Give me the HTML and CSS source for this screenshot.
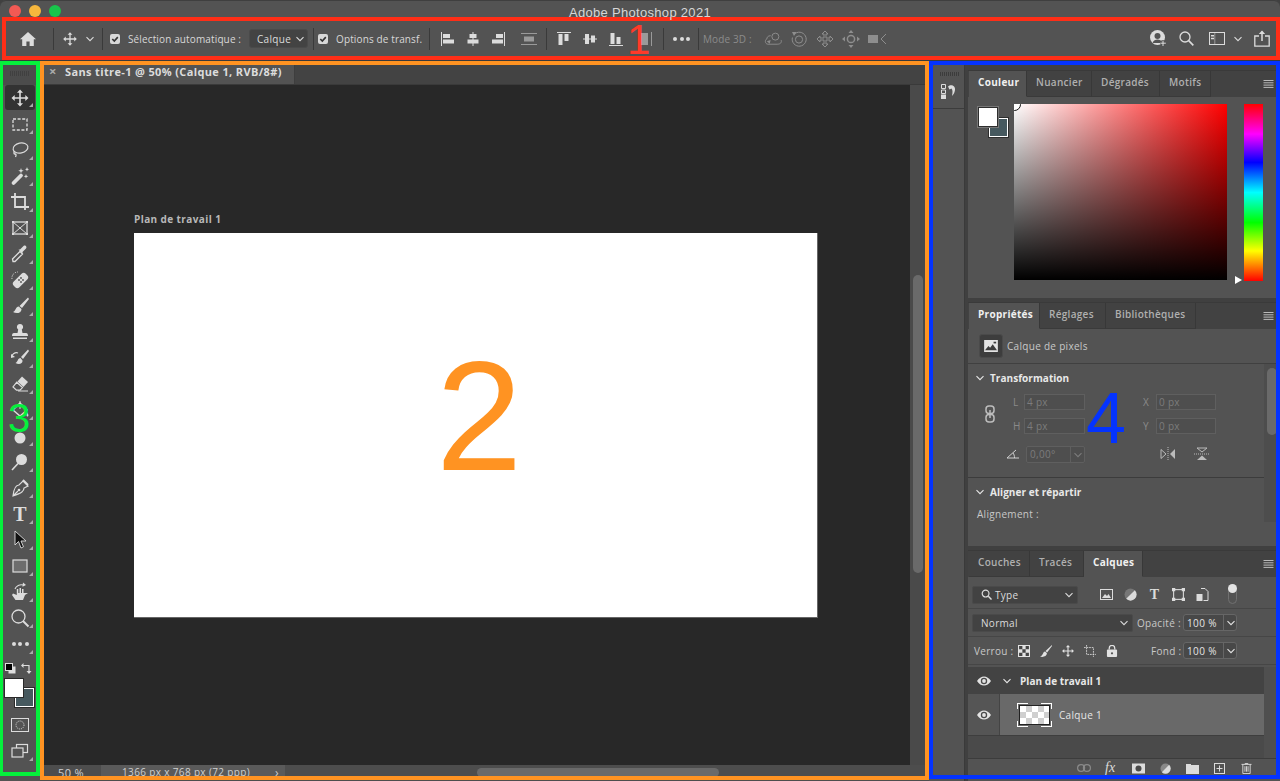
FILE: index.html
```html
<!DOCTYPE html>
<html lang="fr">
<head>
<meta charset="utf-8">
<title>Adobe Photoshop 2021</title>
<link rel="stylesheet" href="styles.css">
</head>
<body>
<svg class="defs" aria-hidden="true">
  <symbol id="chev" viewBox="0 0 10 10"><path d="M1.500 3.200 5 6.700l3.500-3.500" fill="none" stroke="currentColor" stroke-width="1.100"/></symbol>
  <symbol id="eye" viewBox="0 0 16 12"><path d="M1 6c2-3 4.400-4.500 7-4.500S13 3 15 6c-2 3-4.400 4.500-7 4.500S3 9 1 6Z" fill="currentColor"/><circle cx="8" cy="6" r="3.200" fill="#4a4a4a"/><circle cx="8" cy="6" r="1.900" fill="currentColor"/></symbol>
  <symbol id="burger" viewBox="0 0 10 8"><path d="M0 .5h10M0 2.800h10M0 5.100h10M0 7.400h10" stroke="currentColor" stroke-width=".9"/></symbol>
  <symbol id="move" viewBox="0 0 20 20"><path fill="currentColor" d="m10 1.500 3 3.200h-2.200v4.500h4.500V7l3.200 3-3.200 3v-2.200h-4.500v4.500H13l-3 3.200-3-3.200h2.200v-4.500H4.700V13l-3.200-3 3.200-3v2.200h4.500V4.700H7z"/></symbol>
  <symbol id="check" viewBox="0 0 10 10"><rect width="10" height="10" rx="2" fill="#d8d8d8"/><path d="m2.300 5 2 2.100 3.500-4" fill="none" stroke="#333" stroke-width="1.600"/></symbol>
</svg>

<div class="app">
  <header class="titlebar">
    <div class="lights"><i class="light red"></i><i class="light amber"></i><i class="light lime"></i></div>
    <div class="title">Adobe Photoshop 2021</div>
  </header>

  <div class="options">
    <svg class="o-home" viewBox="0 0 16 14"><path fill="currentColor" d="M8 0 0 7.200h2.200V14h4.200V9.400h3.200V14h4.200V7.200H16z"/></svg>
    <i class="sep s-home"></i>
    <svg class="o-move"><use href="#move"/></svg>
    <svg class="o-chev"><use href="#chev"/></svg>
    <i class="sep s-chev"></i>
    <svg class="o-check"><use href="#check"/></svg>
    <span class="o-label l-auto">Sélection automatique :</span>
    <div class="o-select">Calque<svg class="chev10"><use href="#chev"/></svg></div>
    <i class="sep s-sel"></i>
    <svg class="o-check c-two"><use href="#check"/></svg>
    <span class="o-label l-trans">Options de transf.</span>
    <i class="sep s-trans"></i>

    <svg class="al a1" viewBox="0 0 14 14"><path fill="currentColor" d="M0 0h1v14H0zM2 2h7v4H2zM2 7.500h11v4H2z"/></svg>
    <svg class="al a2" viewBox="0 0 14 14"><path fill="currentColor" d="M6.500 0h1v14h-1zM3.500 2h7v4h-7zM1.500 7.500h11v4h-11z"/></svg>
    <svg class="al a2" viewBox="0 0 14 14"><path fill="currentColor" d="M13 0h1v14h-1zM5 2h7v4H5zM1 7.500h11v4H1z"/></svg>
    <svg class="al a4" viewBox="0 0 16 14"><path fill="#9a9a9a" d="M0 1h16v1H0zM0 12h16v1H0zM3 4.500h10v5H3z"/></svg>
    <i class="sep s-al"></i>
    <svg class="al a5" viewBox="0 0 14 14"><path fill="currentColor" d="M0 0h14v1H0zM1.500 2h4v11h-4zM7.500 2h4v7h-4z"/></svg>
    <svg class="al a6" viewBox="0 0 14 14"><path fill="currentColor" d="M0 6.500h14v1H0zM2 2h4v10H2zM8 3.500h4v7H8z"/></svg>
    <svg class="al a6" viewBox="0 0 14 14"><path fill="currentColor" d="M0 13h14v1H0zM1.500 1h4v11h-4zM7.500 5h4v7h-4z"/></svg>
    <svg class="al a8" viewBox="0 0 14 14"><path fill="#9a9a9a" d="M1 1h8v12H1zM12 0h1v14h-1z"/></svg>
    <i class="sep s-a8"></i>
    <div class="o-dots"><i></i><i></i><i></i></div>
    <i class="sep s-dots"></i>
    <span class="o-label dim">Mode 3D :</span>
    <svg class="d3 d-a" viewBox="0 0 19 14"><g fill="none" stroke="currentColor"><circle cx="12" cy="4.500" r="3.700"/><path d="M7 3.500c-3 0-4 2-4 3.500-2 .5-2.500 5 1 5.500h10c3.500 0 5-2 4-4.500"/></g><path d="M3 9.500 7 8l-1 4z" fill="currentColor"/></svg>
    <svg class="d3 d-b" viewBox="0 0 16 16"><g fill="none" stroke="currentColor"><path d="M3 3.500a7 7 0 1 1-1.600 3"/><circle cx="8" cy="8.500" r="3.600"/></g><path d="M1 1h4.500L3 5z" fill="currentColor"/></svg>
    <svg class="d3 d-c" viewBox="0 0 18 18"><path d="m9 1 3 3h-2v4h4V6l3 3-3 3v-2h-4v4h2l-3 3-3-3h2v-4H4v2L1 9l3-3v2h4V4H6z" fill="none" stroke="currentColor"/></svg>
    <svg class="d3 d-d" viewBox="0 0 18 18"><path fill="currentColor" d="m9 0 2.500 3h-5zM9 18l-2.500-3h5zM0 9l3-2.500v5zM18 9l-3-2.500v5z"/><circle cx="9" cy="9" r="3.600" fill="none" stroke="currentColor" stroke-width="1.500"/></svg>
    <svg class="d3 d-e" viewBox="0 0 19 12"><path fill="currentColor" d="M0 2h10v8H0z"/><path d="M18 1l-5 5 5 5" fill="none" stroke="currentColor"/></svg>

    <div class="o-right">
      <svg class="r-user" viewBox="0 0 17 17"><circle cx="7.500" cy="7.500" r="7.500" fill="currentColor"/><circle cx="7.500" cy="6" r="3" fill="#535353"/><path d="M2.500 13c1-3 3-3.500 5-3.500s4 .5 5 3.500z" fill="#535353"/><path d="M13 10v6M10 13h6" stroke="#535353" stroke-width="3"/><path d="M13 10.500v5.500M10.300 13.200h5.500" stroke="currentColor"/></svg>
      <svg class="r-search" viewBox="0 0 15 15"><circle cx="6" cy="6" r="5" fill="none" stroke="currentColor" stroke-width="1.300"/><path d="m9.700 9.700 4.600 4.600" stroke="currentColor" stroke-width="1.700"/></svg>
      <svg class="r-work" viewBox="0 0 16 13"><rect x=".5" y=".5" width="15" height="12" fill="none" stroke="currentColor"/><path d="M2 3h3v1.500H2zM2 5.800h3v1.500H2z" fill="currentColor"/><path d="M5.800 1v11" stroke="currentColor" stroke-width=".5"/></svg>
      <svg class="r-chev"><use href="#chev"/></svg>
      <svg class="r-share" viewBox="0 0 16 17"><path d="M5 6H.8v10.200h14.400V6H11" fill="none" stroke="currentColor" stroke-width="1.300"/><path d="M8 11V1.500" stroke="currentColor" stroke-width="1.500"/><path d="M4.800 4 8 .5 11.200 4z" fill="currentColor"/></svg>
    </div>
  </div>

  <main class="workspace">
    <nav class="tools">
      <div class="grip"></div>
      <div class="tool active"><svg><use href="#move"/></svg></div>
      <div class="tool"><svg viewBox="0 0 20 20"><rect x="3" y="5" width="14" height="11" fill="none" stroke="currentColor" stroke-width="1.300" stroke-dasharray="3 1.600"/></svg></div>
      <div class="tool"><svg viewBox="0 0 20 20"><ellipse cx="10.500" cy="8" rx="7.500" ry="5" transform="rotate(-12 10.500 8)" fill="none" stroke="currentColor" stroke-width="1.200"/><path d="M4.500 11c-1 2-.5 3 .5 3s1.500 1 .5 3" fill="none" stroke="currentColor" stroke-width="1.300"/></svg></div>
      <div class="tool"><svg viewBox="0 0 20 20"><path d="M3.500 17 11 9.500" stroke="currentColor" stroke-width="3.800" stroke-linecap="round"/><path fill="currentColor" d="m11 2 .7 2 2 .7-2 .7-.7 2-.7-2-2-.7 2-.7zM17 1l.6 1.700L19 3.300l-1.400.6L17 5.500l-.6-1.600L15 3.300l1.400-.6zM16 8l.6 1.700 1.700.6-1.700.6L16 12.500l-.6-1.600-1.700-.6 1.700-.6z"/></svg></div>
      <div class="tool"><svg viewBox="0 0 20 20"><path d="M1 5h14v13M5 1v14h14" fill="none" stroke="currentColor" stroke-width="1.800"/></svg></div>
      <div class="tool"><svg viewBox="0 0 20 20"><g fill="none" stroke="currentColor"><rect x="3" y="4" width="14" height="12" stroke-width="1.300"/><path d="m3 4 14 12M17 4 3 16"/></g><path fill="currentColor" d="M2 3h2v2H2zM16 3h2v2h-2zM2 15h2v2H2zM16 15h2v2h-2z"/></svg></div>
      <div class="tool"><svg viewBox="0 0 20 20"><path d="m3 17.500-.5-2.500 7.500-7.500 2.500 2.500L5 17.500z" fill="none" stroke="currentColor" stroke-width="1.300"/><path d="m8.500 5.500 1.500 0 3.500-3.500c1.500-1.500 4 .8 2.500 2.500L12.500 8v2z" fill="currentColor"/></svg></div>
      <div class="tool"><svg viewBox="0 0 20 20"><rect x="2" y="6.500" width="17" height="8" rx="3" transform="rotate(-45 10.500 10.500)" fill="currentColor"/><g fill="#535353"><circle cx="9" cy="10" r=".9"/><circle cx="11" cy="8" r=".9"/><circle cx="11" cy="12" r=".9"/><circle cx="13" cy="10" r=".9"/></g><path d="M2 9a6 6 0 0 1 6-7" fill="none" stroke="currentColor" stroke-dasharray="1.200 1.200"/></svg></div>
      <div class="tool"><svg viewBox="0 0 20 20"><path fill="currentColor" d="M18 1.500 9.500 10 12 12l7-9zM8.800 10.500C5.500 10.500 6 15 3 16c3 2 8.500 1.500 8.500-3z"/></svg></div>
      <div class="tool"><svg viewBox="0 0 20 20"><path fill="currentColor" d="M10 2a3 3 0 0 1 1.800 5.500L12.500 11H16c1.500 0 2 1 2 3H2c0-2 .5-3 2-3h3.500l.7-3.500A3 3 0 0 1 10 2zM3 15.500h14V17H3z"/></svg></div>
      <div class="tool"><svg viewBox="0 0 20 20"><path fill="currentColor" d="M18 1.500 11 9l2 2 6-8zM10.500 10c-3 0-2.500 4-5 5 3 2 7.500 1 7-2.500z"/><path d="M8 5C5 4 2 6 1.500 9" fill="none" stroke="currentColor" stroke-width="1.200"/><path d="M1 6 5 9 1 10z" fill="currentColor"/></svg></div>
      <div class="tool"><svg viewBox="0 0 20 20"><path fill="currentColor" d="m12 2.500 6 5.500-4.500 5-6-5.500z"/><path d="m6.800 8.200 5.700 5.400-2.500 2.600H6.500L3 13z" fill="none" stroke="currentColor" stroke-width="1.200"/><path d="M8 17h10" stroke="currentColor"/></svg></div>
      <div class="tool"><svg viewBox="0 0 20 20"><path d="m10 3 7 7-7 6-7-6z" fill="none" stroke="currentColor" stroke-width="1.400"/><path d="M10 1v8" stroke="currentColor"/><path d="M17 12c1 2 2 3 1 4.500-1.500.5-2-2-1-4.500z" fill="currentColor"/></svg></div>
      <div class="tool"><svg viewBox="0 0 20 20"><circle cx="10" cy="12" r="5.500" fill="currentColor"/></svg></div>
      <div class="tool"><svg viewBox="0 0 20 20"><circle cx="11.500" cy="7.500" r="5.500" fill="currentColor"/><path d="m8 11.500-6 6.500" stroke="currentColor" stroke-width="1.600"/></svg></div>
      <div class="tool"><svg viewBox="0 0 20 20"><path d="M13 3 18 8l-4 2c0 3-2 5-11 8 1-9 3-11 6-11zM3 18l5-5" fill="none" stroke="currentColor" stroke-width="1.200"/><circle cx="9" cy="12" r="1.300" fill="currentColor"/><path d="m13 2 5 5" stroke="currentColor" stroke-width="1.800"/></svg></div>
      <div class="tool"><span class="t-type">T</span></div>
      <div class="tool"><svg viewBox="0 0 20 20"><path d="m5 1 0 14 3.500-3.500L11 18l2.500-1.200L11 11l5 0z" fill="#111" stroke="#ddd" stroke-width=".9"/></svg></div>
      <div class="tool"><svg viewBox="0 0 20 20"><rect x="3" y="4" width="14" height="12" fill="#6d6d6d" stroke="currentColor" stroke-width="1.200"/></svg></div>
      <div class="tool"><svg viewBox="0 0 20 20"><path fill="currentColor" d="M3 11.500 2 13l3.500 5h7.500l2-5 3-2-4.500 0V7h-1.500v4H11V6H9.500v5H8.300V7H6.800v6z"/><path d="M5 7c1-3 5-5 8-4" fill="none" stroke="currentColor" stroke-width="1.100"/><path d="m13 .5 3 2.500-3.500 1.800z" fill="currentColor"/></svg></div>
      <div class="tool"><svg viewBox="0 0 20 20"><circle cx="8.500" cy="8.500" r="6.500" fill="none" stroke="currentColor" stroke-width="1.300"/><path d="m13 13 5.500 5.500" stroke="currentColor" stroke-width="2"/></svg></div>
      <div class="tool"><div class="t-dots"><i></i><i></i><i></i></div></div>

      <div class="colors-mini">
        <svg class="mini-def" viewBox="0 0 11 11"><rect x="3.500" y="3.500" width="7" height="7" fill="#ddd"/><rect x=".5" y=".5" width="7" height="7" fill="#000" stroke="#ddd"/></svg>
        <svg class="mini-swap" viewBox="0 0 11 11"><path d="M1.800 2.500H8V8" fill="none" stroke="currentColor" stroke-width="1.200"/><path d="M2.500 0v5L0 2.500zM5.500 8h5L8 11z" fill="currentColor"/></svg>
      </div>
      <div class="swatches"><i class="sw-bg"></i><i class="sw-fg"></i></div>
      <div class="tool plain"><svg viewBox="0 0 20 20"><rect x="1.500" y="3.500" width="17" height="13" fill="none" stroke="currentColor"/><circle cx="10" cy="10" r="4" fill="none" stroke="currentColor" stroke-dasharray="1 1"/></svg></div>
      <div class="tool"><svg viewBox="0 0 20 20"><rect x="6.500" y="3.500" width="11" height="8" fill="none" stroke="currentColor" stroke-width="1.200"/><rect x="2" y="7" width="11" height="9" fill="#535353" stroke="currentColor" stroke-width="1.200"/></svg></div>
    </nav>

    <section class="doc">
      <div class="doc-tabs">
        <div class="doc-tab"><span class="doc-x">×</span>Sans titre-1 @ 50% (Calque 1, RVB/8#)</div>
      </div>
      <div class="doc-canvas">
        <div class="board-label">Plan de travail 1</div>
        <div class="board"></div>
      </div>
      <div class="vscroll"><i class="v-thumb"></i></div>
      <div class="status">
        <span class="st-zoom">50 %</span>
        <span class="st-info">1366 px x 768 px (72 ppp)<b>›</b></span>
        <div class="hscroll"><i class="h-thumb"></i></div>
      </div>
      <div class="corner"></div>
    </section>

    <aside class="dock">
      <div class="mini-dock">
        <div class="mini-grip"></div>
        <div class="mini-btn"><svg viewBox="0 0 18 16"><path d="M1.500 1.500h4v4h-4zM1.500 7h4v3.500h-4z" fill="none" stroke="currentColor"/><path d="M1 11.500h5V16H1z" fill="currentColor"/><path d="M9.500 2.500c3-1 6 1 5.500 4.500-.3 2.500-1.500 4.500-3 6 .5-3 1-6-.5-7.500L9.500 6.500l-1.500-3z" fill="currentColor"/></svg></div>
      </div>
      <div class="panels">
        <div class="panel p-color">
          <div class="tabs">
            <span class="tab on t-couleur">Couleur</span><span class="tab t-nuancier">Nuancier</span><span class="tab t-degr">Dégradés</span><span class="tab t-motifs">Motifs</span>
            <svg class="burger"><use href="#burger"/></svg>
          </div>
          <div class="color-body">
            <div class="c-swatches"><i class="c-bg"></i><i class="c-fg"></i></div>
            <div class="spectrum"><i class="spec-handle"></i></div>
            <div class="hue"><i class="hue-handle"></i></div>
          </div>
        </div>

        <div class="panel p-props">
          <div class="tabs">
            <span class="tab on t-prop">Propriétés</span><span class="tab t-regl">Réglages</span><span class="tab t-bib">Bibliothèques</span>
            <svg class="burger"><use href="#burger"/></svg>
          </div>
          <div class="kind">
            <div class="kind-ico"><svg viewBox="0 0 16 14"><rect width="16" height="14" fill="#e4e4e4"/><path d="M1 12 5 7l2 2 3-4 5 7z" fill="#3c3c3c"/><path d="M11 2h3v2h-3z" fill="#3c3c3c"/></svg></div>
            <span class="txt">Calque de pixels</span>
          </div>
          <div class="props-scrollarea">
            <div class="props-main">
              <div class="sec-head"><svg class="chev10"><use href="#chev"/></svg><b>Transformation</b></div>
              <div class="tf-grid">
                <svg class="chain" viewBox="0 0 10 18"><g fill="none" stroke="#bdbdbd" stroke-width="1.500"><rect x="1" y="1" width="8" height="7.500" rx="3"/><rect x="1" y="9.500" width="8" height="7.500" rx="3"/><path d="M5 5v8"/></g></svg>
                <span class="tf-l">L</span><span class="field">4 px</span><i></i><span class="tf-l">X</span><span class="field">0 px</span>
                <span class="tf-l">H</span><span class="field">4 px</span><i></i><span class="tf-l">Y</span><span class="field">0 px</span>
              </div>
              <div class="tf-row">
                <svg class="angle" viewBox="0 0 14 10"><path d="M13 9H1L10 1M7 4c1 1 1.500 3 1.500 5" fill="none" stroke="#d0d0d0"/></svg>
                <div class="combo"><span class="combo-v">0,00°</span><span class="combo-c"><svg class="chev10"><use href="#chev"/></svg></span></div>
                <svg class="flip f1" viewBox="0 0 16 14"><path d="M1 2.500 6 7l-5 4.500z" fill="none" stroke="#bbb"/><path d="M15 2v10L10 7z" fill="#bbb"/><path d="M8 0v14" stroke="#bbb" stroke-dasharray="1 1"/></svg>
                <svg class="flip f2" viewBox="0 0 16 14"><path d="M3 1h10L8 5z" fill="none" stroke="#bbb"/><path d="M3 13h10L8 8.500z" fill="#bbb"/><path d="M0 7h16" stroke="#bbb" stroke-dasharray="1 1"/></svg>
              </div>
              <div class="rule r-a"></div>
              <div class="sec-head"><svg class="chev10"><use href="#chev"/></svg><b>Aligner et répartir</b></div>
              <div class="align-label txt">Alignement :</div>
            </div>
            <div class="props-scroll"><i></i></div>
          </div>
        </div>

        <div class="panel p-layers">
          <div class="tabs">
            <span class="tab t-couches">Couches</span><span class="tab t-traces">Tracés</span><span class="tab on t-calques">Calques</span>
            <svg class="burger"><use href="#burger"/></svg>
          </div>
          <div class="lay-row r-filter">
            <div class="sel s-type"><svg class="mag" viewBox="0 0 12 12"><circle cx="5" cy="5" r="3.700" fill="none" stroke="#ddd" stroke-width="1.300"/><path d="m8 8 3.500 3.500" stroke="#ddd" stroke-width="1.600"/></svg><span>Type</span><svg class="chev10 push"><use href="#chev"/></svg></div>
            <svg class="fi fi1" viewBox="0 0 13 11"><rect x=".5" y=".5" width="12" height="10" fill="none" stroke="currentColor"/><path d="M2 9l3-4 2 2 1.500-2L11 9z" fill="currentColor"/></svg>
            <svg class="fi" viewBox="0 0 12 12"><circle cx="6" cy="6" r="5.500" fill="#777"/><path d="M10 2A5.500 5.500 0 0 1 2 10z" fill="currentColor"/></svg>
            <span class="fi-t">T</span>
            <svg class="fi" viewBox="0 0 12 12"><rect x="1.500" y="1.500" width="9" height="9" fill="none" stroke="currentColor"/><path fill="currentColor" d="M0 0h3v3H0zM9 0h3v3H9zM0 9h3v3H0zM9 9h3v3H9z"/></svg>
            <svg class="fi" viewBox="0 0 12 13"><path d="M4.500.5h4l3 3v9H7" fill="none" stroke="currentColor"/><rect y="6" width="6" height="7" fill="currentColor"/></svg>
            <div class="toggle"><i></i></div>
          </div>
          <div class="lay-row r-blend">
            <div class="sel s-normal"><span>Normal</span><svg class="chev10 push"><use href="#chev"/></svg></div>
            <span class="txt l-op">Opacité :</span>
            <div class="numbox"><span>100 %</span><b><svg class="chev10"><use href="#chev"/></svg></b></div>
          </div>
          <div class="lay-row r-lock">
            <span class="txt l-lock">Verrou :</span>
            <svg class="lk" viewBox="0 0 11 11"><rect width="11" height="11" fill="#e2e2e2"/><path fill="#444" d="M1 1h3v3H1zM7 1h3v3H7zM4 4h3v3H4zM1 7h3v3H1zM7 7h3v3H7z"/></svg>
            <svg class="lk" viewBox="0 0 13 13"><path fill="#e2e2e2" d="M13 0 6 6.500l1.700 1.700L13 1zM5.500 7C3 7 4 11 0 12.500c3 1 7.500 0 7.500-3.500z"/></svg>
            <svg class="lk lk-move"><use href="#move"/></svg>
            <svg class="lk" viewBox="0 0 14 14"><path d="M3 0v11h11M0 3h11v11" fill="none" stroke="#ddd" stroke-dasharray="2 1"/></svg>
            <svg class="lk" viewBox="0 0 11 13"><rect y="5" width="11" height="8" rx="1" fill="#e2e2e2"/><path d="M2.500 5V3.500a3 3 0 0 1 6 0V5" fill="none" stroke="#e2e2e2" stroke-width="1.400"/><circle cx="5.500" cy="9" r="1.200" fill="#535353"/></svg>
            <span class="txt l-fond">Fond :</span>
            <div class="numbox"><span>100 %</span><b><svg class="chev10"><use href="#chev"/></svg></b></div>
          </div>
          <div class="layers">
            <div class="layer-list">
              <div class="l-group">
                <svg class="eye"><use href="#eye"/></svg>
                <svg class="chev10 g-chev"><use href="#chev"/></svg>
                <b>Plan de travail 1</b>
              </div>
              <div class="l-layer">
                <div class="l-eye"><svg class="eye"><use href="#eye"/></svg></div>
                <div class="l-main">
                  <div class="thumb"><i></i></div>
                  <span>Calque 1</span>
                </div>
              </div>
            </div>
            <div class="layer-scroll"></div>
          </div>
          <div class="lay-foot">
            <svg class="fo dim-ico" viewBox="0 0 14 8"><g fill="none" stroke="currentColor" stroke-width="1.200"><rect x=".6" y=".6" width="7" height="6.800" rx="3.400"/><rect x="6.400" y=".6" width="7" height="6.800" rx="3.400"/></g></svg>
            <span class="fx">fx</span>
            <svg class="fo" viewBox="0 0 13 10"><rect width="13" height="10" fill="currentColor"/><circle cx="6.500" cy="5" r="3" fill="#4a4a4a"/></svg>
            <svg class="fo" viewBox="0 0 12 12"><circle cx="6" cy="6" r="5.500" fill="#888"/><path d="M10 2A5.500 5.500 0 0 1 2 10z" fill="currentColor"/></svg>
            <svg class="fo" viewBox="0 0 13 11"><path d="M0 1h5v1h8v9H0z" fill="currentColor"/></svg>
            <svg class="fo" viewBox="0 0 11 11"><rect x=".5" y=".5" width="10" height="10" fill="none" stroke="currentColor"/><path d="M5.500 2.500v6M2.500 5.500h6" stroke="currentColor"/></svg>
            <svg class="fo" viewBox="0 0 11 12"><path d="M0 1.500h11M4 1.500V.5h3v1M1.500 1.500v10h8v-10M3.800 3.500v6M5.500 3.500v6M7.200 3.500v6" fill="none" stroke="currentColor"/></svg>
          </div>
        </div>
      </div>
    </aside>
  </main>

  <div class="mark m-red"></div>
  <div class="mark m-orange"></div>
  <div class="mark m-green"></div>
  <div class="mark m-blue"></div>
  <div class="num n1">1</div>
  <div class="num n2">2</div>
  <div class="num n3">3</div>
  <div class="num n4">4</div>
</div>
</body>
</html>
```

FILE: styles.css
```css
* { box-sizing: border-box; }
html, body { margin: 0; height: 100%; overflow: hidden; background: #404040; }
body { font-family: "Open Sans", "Liberation Sans", sans-serif; font-size: 10px; color: #dcdcdc; }
svg { display: block; flex: none; }
.defs { width: 0; height: 0; position: absolute; }

.app { position: relative; width: 1280px; height: 781px; display: flex; flex-direction: column; background: #404040; }

.titlebar { height: 17px; background: #535353; display: flex; position: relative; overflow: visible; border-radius: 6px 6px 0 0; box-shadow: inset 0 1px 0 #3f3f3f; }
.lights { display: flex; gap: 8px; padding: 5px 0 0 9px; }
.light { width: 12px; height: 12px; border-radius: 50%; display: block; }
.red { background: #f25a54; }
.amber { background: #f6b73d; }
.lime { background: #18c44b; }
.title { position: absolute; left: 0; right: 0; top: 5px; text-align: center; font: 13px/16px "Liberation Sans", sans-serif; letter-spacing: .3px; color: #d6d6d6; z-index: 1; }

.options { height: 44px; padding: 0 0 0 20px; display: flex; align-items: center; background: #535353; border-bottom: 1px solid #3a3a3a; color: #dcdcdc; }
.sep { display: block; width: 1px; height: 22px; background: #3a3a3a; flex: none; }
.o-home { width: 16px; height: 14px; }
.s-home { margin: 0 8px 0 17px; }
.o-move { width: 16px; height: 16px; }
.o-chev { width: 10px; height: 10px; margin: 0 7px 0 7px; }
.s-chev { margin-right: 7px; }
.o-check { width: 10px; height: 10px; }
.o-label { font-size: 10px; letter-spacing: .13px; color: #d8d8d8; white-space: nowrap; }
.l-auto { margin: 0 8px; width: 113px; }
.o-select { width: 59px; height: 19px; background: #434343; border: 1px solid #4a4a4a; border-radius: 3px; display: flex; align-items: center; justify-content: space-between; padding: 0 2px 0 7px; font-size: 10px; letter-spacing: .3px; }
.chev10 { width: 10px; height: 10px; flex: none; }
.s-sel { margin: 0 4px 0 5px; }
.l-trans { margin: 0 7px 0 8px; width: 86px; }
.al { width: 14px; height: 14px; }
.a1 { margin-left: 11px; }
.a2 { margin-left: 11px; }
.a4 { width: 16px; margin-left: 16px; }
.s-al { margin: 0 10px 0 9px; }
.a6 { margin-left: 12px; }
.a8 { margin-left: 16px; }
.s-a8 { margin: 0 9px 0 10px; }
.o-dots, .t-dots { display: flex; gap: 2.500px; }
.o-dots i, .t-dots i { width: 4px; height: 4px; border-radius: 50%; background: #dcdcdc; display: block; }
.s-dots { margin: 0 4px 0 8px; }
.dim { color: #8b8b8b; width: 49px; }
.d3 { color: #8e8e8e; }
.d-a { width: 18px; height: 14px; margin-left: 12px; }
.d-b { width: 16px; height: 16px; margin-left: 9px; }
.d-c { width: 18px; height: 18px; margin-left: 9px; }
.d-d { width: 18px; height: 18px; margin-left: 8px; }
.d-e { width: 19px; height: 12px; margin-left: 8px; }
.o-right { margin-left: auto; padding-right: 10px; display: flex; align-items: center; color: #dcdcdc; }
.r-user { width: 17px; height: 17px; }
.r-search { width: 15px; height: 15px; margin-left: 12px; }
.r-work { width: 16px; height: 13px; margin-left: 15px; }
.r-chev { width: 10px; height: 10px; margin: 0 0 0 8px; }
.r-share { width: 16px; height: 17px; margin-left: 11px; }

.workspace { flex: 1; min-height: 0; display: flex; }

.tools { width: 40px; flex: none; padding: 0 2px 0 5px; background: #535353; display: flex; flex-direction: column; align-items: stretch; }
.grip { height: 24px; margin: 0 -5px 0 -5px; background: repeating-linear-gradient(90deg, #404040 0 1px, transparent 1px 2px) 10px 10px / 20px 5px no-repeat, #4c4c4c; }
.tool { position: relative; width: 30px; height: 26px; flex: none; display: flex; align-items: center; justify-content: center; color: #dcdcdc; }
.tool svg { width: 20px; height: 20px; }
.tool::after { content: ""; position: absolute; right: 2px; bottom: 3px; border: 2px solid transparent; border-right-color: #a8a8a8; border-bottom-color: #a8a8a8; }
.tool.plain::after { display: none; }
.tool.active { background: #333; border-radius: 3px; height: 25px; margin-bottom: 1px; }
.t-type { font: bold 20px/20px "Liberation Serif", serif; color: #dcdcdc; }
.colors-mini { height: 15px; margin-top: 4px; display: flex; align-items: center; justify-content: space-between; padding-right: 6px; color: #dcdcdc; }
.mini-def { width: 11px; height: 11px; }
.mini-swap { width: 11px; height: 11px; }
.swatches { position: relative; height: 34px; flex: none; margin-top: 2px; }
.sw-fg, .sw-bg { position: absolute; display: block; }
.sw-fg { left: -1px; top: 0; width: 20px; height: 20px; background: #fff; border: 1px solid #2a2a2a; }
.sw-bg { left: 10px; top: 10px; width: 19px; height: 19px; background: #46595f; border: 1px solid #fff; outline: 1px solid #2a2a2a; }

.doc { flex: none; width: 889px; display: grid; grid-template-columns: 870px 19px; grid-template-rows: 24px 680px 1fr; background: #535353; }
.doc-tabs { grid-column: 1 / 3; padding-left: 4px; background: #434343; border-bottom: 1px solid #3a3a3a; display: flex; }
.doc-tab { width: 251px; background: #535353; display: flex; align-items: center; padding: 0 0 3px 5px; font-size: 11px; font-weight: 700; letter-spacing: .36px; color: #dcdcdc; white-space: nowrap; border-right: 1px solid #3e3e3e; }
.doc-x { width: 16px; font-size: 13px; line-height: 12px; color: #aaa; }
.doc-canvas { background: #282828; padding: 127px 0 0 94px; }
.board-label { font-size: 10px; font-weight: 700; color: #b8b8b8; line-height: 14px; height: 21px; letter-spacing: .4px; }
.board { width: 684px; height: 385px; background: #fff; border-right: 1px solid #666; border-bottom: 1px solid #666; }
.vscroll { background: #4a4a4a; padding: 190px 0 0 3px; }
.v-thumb { display: block; width: 10px; height: 298px; background: #6a6a6a; border-radius: 5px; }
.status { display: flex; align-items: flex-start; background: #4d4d4d; line-height: 15px; font-size: 10px; color: #d0d0d0; letter-spacing: .35px; }
.st-zoom { width: 61px; padding-left: 18px; font-size: 11px; }
.st-info { width: 184px; height: 15px; background: #5a5a5a; padding-left: 21px; display: flex; justify-content: space-between; padding-right: 6px; white-space: nowrap; }
.st-info b { font-weight: 400; font-size: 12px; }
.hscroll { flex: 1; padding: 3px 0 0 192px; }
.h-thumb { display: block; width: 242px; height: 9px; background: #6a6a6a; border-radius: 5px; }
.corner { background: #4d4d4d; }

.dock { flex: 1; min-width: 0; display: flex; background: #404040; }
.mini-dock { width: 36px; padding-left: 4px; background: #535353; border-right: 1px solid #3a3a3a; margin-right: 3px; }
.mini-grip { height: 9px; margin: 9px 2px 0 7px; width: 20px; background: repeating-linear-gradient(90deg, #3c3c3c 0 1px, transparent 1px 2px) 0 2px / 20px 4px no-repeat; }
.mini-btn { height: 30px; padding: 3px 0 0 7px; border-bottom: 1px solid #3c3c3c; color: #dcdcdc; }
.mini-btn svg { width: 18px; height: 18px; }

.panels { flex: 1; display: flex; flex-direction: column; min-width: 0; padding-top: 9px; }
.panel { background: #535353; flex: none; }
.tabs { height: 27px; display: flex; background: #424242; position: relative; align-items: stretch; color: #b0b0b0; border-top: 1px solid #3a3a3a; }
.tab { display: flex; align-items: center; padding: 0 0 3px 9px; font-size: 10px; font-weight: 600; letter-spacing: .3px; border-right: 1px solid #383838; border-bottom: 1px solid #3a3a3a; white-space: nowrap; }
.tab.on { background: #535353; color: #f0f0f0; border-bottom-color: #535353; font-weight: 700; }
.burger { position: absolute; right: 6px; top: 9px; width: 11px; height: 8px; color: #c8c8c8; }
.t-couleur { width: 58px; margin-left: 1px; }
.t-nuancier { width: 65px; }
.t-degr { width: 68px; }
.t-motifs { width: 51px; }
.t-prop { width: 71px; margin-left: 1px; }
.t-regl { width: 66px; }
.t-bib { width: 90px; }
.t-couches { width: 61px; margin-left: 1px; }
.t-traces { width: 54px; }
.t-calques { width: 59px; }

.p-color { height: 228px; }
.color-body { position: relative; height: 201px; display: flex; padding: 7px 0 0 46px; }
.c-swatches { position: absolute; left: 10px; top: 10px; }
.c-fg, .c-bg { position: absolute; display: block; }
.c-fg { left: 0; top: 0; width: 20px; height: 20px; background: #fff; border: 1px solid #2e2e2e; outline: 1px solid #777; }
.c-bg { left: 11px; top: 11px; width: 19px; height: 19px; background: #46595f; border: 1px solid #fff; outline: 1px solid #2e2e2e; }
.spectrum { position: relative; width: 213px; height: 176px; background: linear-gradient(to top, #000, transparent), linear-gradient(to right, #fff, #f00); }
.spec-handle { position: absolute; left: -6px; top: -6px; width: 13px; height: 13px; border-radius: 50%; background: #fff; border: 1px solid #111; clip-path: inset(6px 0 0 6px); }
.hue { position: relative; width: 19px; height: 177px; margin-left: 17px; background: linear-gradient(#f00, #f0f 17%, #00f 33%, #0ff 50%, #0f0 67%, #ff0 83%, #f00); }
.hue-handle { position: absolute; left: -9px; top: 172px; width: 7px; height: 8px; background: #fff; clip-path: polygon(0 0, 100% 50%, 0 100%); }

.p-props { height: 244px; margin-top: 4px; }
.kind { height: 35px; display: flex; align-items: center; padding-left: 11px; border-bottom: 1px solid #404040; gap: 4px; }
.kind-ico { width: 24px; height: 24px; background: #3d3d3d; border: 1px solid #4a4a4a; border-radius: 3px; display: flex; align-items: center; justify-content: center; }
.kind-ico svg { width: 14px; height: 12px; }
.txt { font-size: 10px; letter-spacing: .3px; color: #c8c8c8; white-space: nowrap; }
.props-scrollarea { display: flex; height: 182px; }
.props-main { width: 296px; }
.props-scroll { width: 16px; height: 158px; background: #4d4d4d; padding: 4px 0 0 3px; }
.props-scroll i { display: block; width: 10px; height: 67px; border-radius: 5px; background: #6a6a6a; }
.sec-head { height: 30px; padding: 0 0 2px 7px; display: flex; align-items: center; gap: 5px; font-size: 10px; letter-spacing: .05px; color: #e8e8e8; }
.tf-grid { display: grid; grid-template-columns: 45px 11px 61px 58px 13px 60px; grid-auto-rows: 16px; row-gap: 8px; align-items: center; }
.chain { grid-row: 1 / 3; width: 10px; height: 18px; margin-left: 17px; }
.tf-l { color: #8a8a8a; font-size: 10px; }
.field { height: 16px; border: 1px solid #5f5f5f; background: #4e4e4e; line-height: 14px; padding-left: 2px; color: #7c7c7c; font-size: 10px; letter-spacing: .3px; }
.tf-row { display: flex; align-items: center; height: 18px; margin-top: 11px; }
.angle { width: 14px; height: 10px; margin-left: 38px; }
.combo { display: flex; width: 59px; height: 17px; border: 1px solid #5f5f5f; border-radius: 2px; margin-left: 6px; color: #7c7c7c; background: #4e4e4e; }
.combo-v { flex: 1; line-height: 15px; padding-left: 3px; letter-spacing: .3px; }
.combo-c { width: 14px; border-left: 1px solid #5f5f5f; padding: 3px 0 0 2px; }
.flip { width: 16px; height: 14px; }
.f1 { margin-left: 75px; }
.f2 { margin-left: 18px; }
.rule { height: 1px; background: #3c3c3c; }
.r-a { margin-top: 14px; }
.align-label { padding-left: 9px; line-height: 12px; margin-top: 0; }

.p-layers { margin-top: 4px; flex: 1; display: flex; flex-direction: column; }
.lay-row { height: 28px; display: flex; align-items: center; border-bottom: 1px solid #464646; flex: none; }
.r-filter { height: 32px; padding: 4px 0 0 4px; }
.sel { display: flex; align-items: center; height: 18px; background: #424242; border: 1px solid #4a4a4a; border-radius: 2px; padding: 0 3px 0 8px; font-size: 10px; letter-spacing: .3px; color: #dcdcdc; }
.push { margin-left: auto; }
.s-type { width: 106px; gap: 3px; padding-left: 8px; }
.mag { width: 11px; height: 11px; }
.fi { width: 13px; height: 13px; margin-left: 11px; color: #dcdcdc; }
.fi1 { margin-left: 22px; }
.fi-t { width: 13px; margin-left: 11px; font: bold 14px/14px "Liberation Serif", serif; text-align: center; }
.toggle { width: 9px; height: 18px; border: 1px solid #707070; border-radius: 5px; margin-left: 19px; position: relative; }
.toggle i { position: absolute; left: -1px; top: -3px; width: 9px; height: 9px; border-radius: 50%; background: #e4e4e4; }
.r-blend { padding-left: 4px; }
.s-normal { width: 161px; }
.l-op { width: 50px; padding-left: 4px; }
.numbox { display: flex; width: 54px; height: 17px; border: 1px solid #666; border-radius: 3px; color: #e4e4e4; font-size: 10px; letter-spacing: .4px; background: #484848; }
.numbox span { width: 40px; line-height: 16px; padding-left: 3px; white-space: nowrap; }
.numbox b { flex: 1; border-left: 1px solid #666; padding: 3px 0 0 2px; font-weight: 400; }
.r-lock { padding-left: 6px; }
.l-lock { width: 44px; }
.lk { width: 12px; height: 12px; margin-right: 10px; color: #e2e2e2; flex: none; }
.lk-move { width: 14px; height: 14px; margin: 0 9px 0 -1px; }
.l-fond { margin-left: 23px; width: 32px; }
.layers { height: 92px; flex: none; display: flex; margin-top: 2px; border-bottom: 1px solid #3c3c3c; background: #4a4a4a; }
.layer-list { width: 296px; }
.layer-scroll { flex: 1; background: #4f4f4f; }
.eye { width: 16px; height: 12px; color: #e4e4e4; }
.l-group { height: 27px; background: #434343; display: flex; align-items: center; padding-left: 8px; font-size: 10px; letter-spacing: .05px; color: #e8e8e8; }
.g-chev { margin: 0 8px 0 10px; }
.l-layer { height: 42px; display: flex; border-bottom: 1px solid #3e3e3e; }
.l-eye { width: 32px; background: #555; display: flex; align-items: center; padding-left: 8px; border-right: 1px solid #444; }
.l-main { flex: 1; background: #696969; display: flex; align-items: center; padding-left: 17px; gap: 7px; font-size: 10px; letter-spacing: .3px; color: #e6e6e6; }
.thumb { width: 35px; height: 24px; padding: 2px; position: relative; background: linear-gradient(#fff, #fff) 0 0 / 11px 1px no-repeat, linear-gradient(#fff, #fff) 100% 0 / 11px 1px no-repeat, linear-gradient(#fff, #fff) 0 100% / 11px 1px no-repeat, linear-gradient(#fff, #fff) 100% 100% / 11px 1px no-repeat, linear-gradient(#fff, #fff) 0 0 / 1px 6px no-repeat, linear-gradient(#fff, #fff) 100% 0 / 1px 6px no-repeat, linear-gradient(#fff, #fff) 0 100% / 1px 6px no-repeat, linear-gradient(#fff, #fff) 100% 100% / 1px 6px no-repeat; }
.thumb i { display: block; width: 100%; height: 100%; border: 1px solid #222; background: repeating-conic-gradient(#cfcfcf 0 25%, #fff 0 50%) 0 0 / 12px 12px; }
.lay-foot { height: 24px; display: flex; align-items: center; padding: 0 0 6px 109px; color: #dcdcdc; background: #535353; }
.fo { width: 13px; height: 11px; margin-right: 14px; }
.dim-ico { color: #8a8a8a; width: 14px; height: 8px; margin-right: 14px; }
.fx { font: italic 14px/14px "Liberation Serif", serif; width: 13px; margin-right: 14px; }

.mark { position: absolute; border: 4px solid; pointer-events: none; }
.m-red { left: 2px; top: 17px; width: 1278px; height: 43px; border-color: #ff2e17; }
.m-orange { left: 40px; top: 61px; width: 889px; height: 719px; border-color: #ff9322; }
.m-green { left: -1px; top: 61px; width: 41px; height: 715px; border-color: #05f03c; }
.m-blue { left: 929px; top: 61px; width: 351px; height: 718px; border-color: #0433ff; }
.num { position: absolute; font-family: "Liberation Sans", sans-serif; line-height: 1; }
.n1 { left: 627px; top: 19px; font-size: 42px; color: #ff3a2a; }
.n2 { left: 436px; top: 339px; font-size: 155px; color: #ff9322; }
.n3 { left: 8px; top: 398px; font-size: 40px; color: #05f03c; }
.n4 { left: 1086px; top: 382px; font-size: 72px; color: #0433ff; }
```
